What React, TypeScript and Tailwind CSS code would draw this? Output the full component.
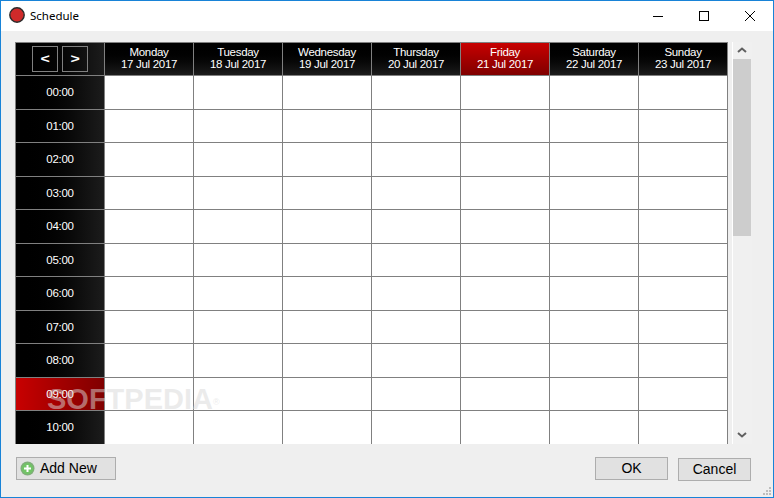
const days = [
  ["Monday", "17 Jul 2017"],
  ["Tuesday", "18 Jul 2017"],
  ["Wednesday", "19 Jul 2017"],
  ["Thursday", "20 Jul 2017"],
  ["Friday", "21 Jul 2017"],
  ["Saturday", "22 Jul 2017"],
  ["Sunday", "23 Jul 2017"],
];
const hours = ["00:00", "01:00", "02:00", "03:00", "04:00", "05:00", "06:00", "07:00", "08:00", "09:00", "10:00"];

function Btn({ children, className }: { children: React.ReactNode; className: string }) {
  return (
    <button className={"h-[23px] border border-[#adadad] bg-[#e1e1e1] text-[14px] text-black flex items-center " + className}>
      {children}
    </button>
  );
}

export default function App() {
  return (
    <div className="relative w-[774px] h-[498px] flex flex-col border border-[#1883d7] bg-[#efefef] overflow-hidden font-['Liberation_Sans',sans-serif]">
      <div className="h-[30px] bg-white flex items-center shrink-0">
        <svg width="16" height="16" viewBox="0 0 16 16" className="ml-[8px] mb-[2px]">
          <circle cx="8" cy="8" r="7.2" fill="#cf2a2a" stroke="#2a2a2a" strokeWidth="1.4" />
        </svg>
        <span className="ml-[5px] text-[11.5px] text-black font-['Noto_Sans',sans-serif]">Schedule</span>
        <div className="ml-auto flex items-center text-black">
          <svg width="12" height="12" viewBox="0 0 12 12" className="mr-[34px]"><path d="M1 6.5h10" stroke="#000" strokeWidth="1" /></svg>
          <svg width="12" height="12" viewBox="0 0 12 12" className="mr-[34px]"><rect x="1.5" y="1.5" width="9" height="9" fill="none" stroke="#000" /></svg>
          <svg width="12" height="12" viewBox="0 0 12 12" className="mr-[17px]"><path d="M1 1l10 10M11 1L1 11" stroke="#000" strokeWidth="1" /></svg>
        </div>
      </div>

      <div className="flex pl-[14px] pt-[11px] h-[413px] shrink-0">
        <div className="w-[713px] h-[402px] border-l border-t border-[#808080] overflow-hidden grid grid-cols-[89px_repeat(7,89px)] grid-rows-[33px_repeat(11,33.5px)] text-[11.5px] leading-[12px] tracking-[-0.3px] text-white">
          <div className="border-r border-b border-[#808080] bg-gradient-to-r from-black to-[#1c1c1c] flex items-center justify-center gap-[4px]">
            <span className="w-[26px] h-[26px] border border-[#808080] flex items-center justify-center font-bold text-[16px]"><span className="scale-y-75">&lt;</span></span>
            <span className="w-[26px] h-[26px] border border-[#808080] flex items-center justify-center font-bold text-[16px]"><span className="scale-y-75">&gt;</span></span>
          </div>
          {days.map(([d, date]) => (
            <div
              key={d}
              className={
                "border-r border-b border-[#808080] flex flex-col items-center justify-center pb-[2px] bg-gradient-to-b " +
                (d === "Friday" ? "from-[#c80000] to-[#800000]" : "from-black to-[#1c1c1c]")
              }
            >
              <span>{d}</span>
              <span>{date}</span>
            </div>
          ))}
          {hours.map((h) => (
            <div key={h} className="contents">
              <div
                className={
                  (h === "10:00" ? "border-r pb-px" : "border-r border-b") +
                  " border-[#808080] flex items-center justify-center bg-gradient-to-r " +
                  (h === "09:00" ? "from-[#c80000] to-[#800000]" : "from-black to-[#1c1c1c]")
                }
              >
                {h}
              </div>
              {days.map(([d]) => (
                <div key={d} className={(h === "10:00" ? "border-r" : "border-r border-b") + " border-[#808080] bg-white"} />
              ))}
            </div>
          ))}
        </div>
        <div className="w-[20px] h-[402px] ml-[4px] border-l border-white bg-[#f0f0f0] flex flex-col items-start">
          <svg width="10" height="6" viewBox="0 0 10 6" className="mt-[5px] ml-[4px]"><path d="M1 5l4-3.5 4 3.5" fill="none" stroke="#606060" strokeWidth="2" /></svg>
          <div className="w-[18px] h-[177px] mt-[6px] bg-[#cdcdcd]" />
          <svg width="10" height="6" viewBox="0 0 10 6" className="mt-auto mb-[6px] ml-[4px]"><path d="M1 1l4 3.5 4-3.5" fill="none" stroke="#606060" strokeWidth="2" /></svg>
        </div>
      </div>

      <div className="flex items-start pl-[15px] pr-[22px] pt-[13px]">
        <Btn className="w-[100px] pl-[3px]">
          <svg width="15" height="15" viewBox="0 0 15 15">
            <circle cx="7.5" cy="7.5" r="7" fill="#7fae78" />
            <circle cx="7.5" cy="7.5" r="5.6" fill="#72c466" />
            <path d="M7.5 4v7M4 7.5h7" stroke="#fff" strokeWidth="2" />
          </svg>
          <span className="ml-[5px]">Add New</span>
        </Btn>
        <Btn className="w-[73px] ml-auto justify-center">OK</Btn>
        <Btn className="w-[73px] ml-[10px] mt-px justify-center">Cancel</Btn>
      </div>

      <div className="absolute left-[46px] top-[384px] text-[29px] leading-[29px] font-bold text-[#d8d8d8]/50 pointer-events-none">
        SOFTPEDIA<sup className="text-[9px] font-normal">®</sup>
      </div>

      <svg width="8" height="8" viewBox="0 0 8 8" className="absolute right-[2px] bottom-[2px]">
        <path d="M6 0h2v2H6zM3 3h2v2H3zM6 3h2v2H6zM0 6h2v2H0zM3 6h2v2H3zM6 6h2v2H6z" fill="#bdbdbd" />
      </svg>
    </div>
  );
}
